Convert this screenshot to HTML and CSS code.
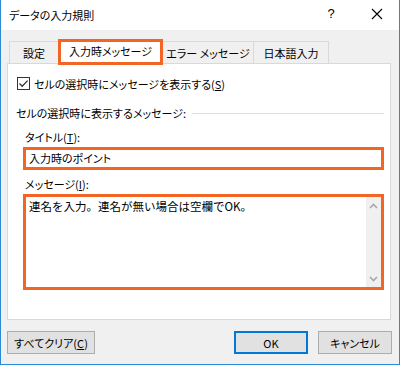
FILE: index.html
```html
<!DOCTYPE html>
<html lang="ja">
<head>
<meta charset="utf-8">
<title>データの入力規則</title>
<link rel="stylesheet" href="styles.css">
</head>
<body>
<div class="window">
  <div class="titlebar">
    <span class="title">データの入力規則</span>
    <span class="help">?</span>
    <span class="close">
      <svg width="12" height="12" viewBox="0 0 12 12"><path d="M1 1 L11 11 M11 1 L1 11" stroke="#000" stroke-width="1.1" fill="none"/></svg>
    </span>
  </div>
  <div class="tabs">
    <div class="tab t1">設定</div>
    <div class="tab t2 active">入力時メッセージ</div>
    <div class="tab t3">エラー メッセージ</div>
    <div class="tab t4">日本語入力</div>
  </div>
  <div class="panel">
    <div class="check-row">
      <span class="checkbox">
        <svg width="11" height="11" viewBox="0 0 11 11"><path d="M1.5 5.5 L4.2 8.2 L9.6 2.6" stroke="#333" stroke-width="1.3" fill="none"/></svg>
      </span>
      <span class="check-label">セルの選択時にメッセージを表示する(<u>S</u>)</span>
    </div>
    <div class="group">
      <span class="group-label">セルの選択時に表示するメッセージ:</span>
      <span class="rule"></span>
    </div>
    <div class="field-label">タイトル(<u>T</u>):</div>
    <div class="input">入力時のポイント</div>
    <div class="field-label">メッセージ(<u>I</u>):</div>
    <div class="textarea">
      <div class="text">連名を入力。連名が無い場合は空欄でOK。</div>
      <div class="scroll">
        <span class="arrow">
          <svg width="9" height="6" viewBox="0 0 9 6"><path d="M1 5 L4.5 1.5 L8 5" stroke="#a8a8a8" stroke-width="1.6" fill="none"/></svg>
        </span>
        <span class="arrow">
          <svg width="9" height="6" viewBox="0 0 9 6"><path d="M1 1 L4.5 4.5 L8 1" stroke="#a8a8a8" stroke-width="1.6" fill="none"/></svg>
        </span>
      </div>
    </div>
  </div>
  <div class="buttons">
    <div class="btn clear">すべてクリア(<u>C</u>)</div>
    <div class="spacer"></div>
    <div class="btn ok">OK</div>
    <div class="btn cancel">キャンセル</div>
  </div>
</div>
</body>
</html>
```

FILE: styles.css
```css
html, body {
  margin: 0;
  padding: 0;
}
body {
  width: 400px;
  height: 365px;
  font-family: "Noto Sans CJK JP", "Noto Sans", sans-serif;
  font-feature-settings: "palt";
  font-size: 11px;
  color: #000;
}
u {
  text-decoration: underline;
  text-underline-offset: 1px;
}
.window {
  box-sizing: border-box;
  width: 400px;
  height: 365px;
  background: #f0f0f0;
  border-left: 1px solid #2b8ad6;
  border-right: 1px solid #2b8ad6;
  border-bottom: 1px solid #2b8ad6;
  display: flex;
  flex-direction: column;
}
.titlebar {
  height: 30px;
  background: #fff;
  display: flex;
  align-items: center;
  padding-left: 8px;
  flex-shrink: 0;
}
.title {
  font-size: 11px;
  line-height: 16px;
}
.help {
  margin-left: auto;
  width: 12px;
  text-align: center;
  font-family: "Liberation Sans", sans-serif;
  font-size: 13px;
  line-height: 16px;
  margin-top: -2px;
}
.close {
  width: 12px;
  height: 12px;
  margin-left: 34px;
  margin-right: 16px;
  margin-top: -2px;
  display: flex;
}
.tabs {
  height: 24px;
  margin-top: 9px;
  padding-left: 8px;
  display: flex;
  align-items: flex-end;
  flex-shrink: 0;
}
.tab {
  box-sizing: border-box;
  height: 22px;
  border-top: 1px solid #d9d9d9;
  border-left: 1px solid #d9d9d9;
  display: flex;
  align-items: center;
  justify-content: center;
  line-height: 16px;
  white-space: nowrap;
  background: #f0f0f0;
}
.t1 { width: 49px; }
.t2 { width: 105px; }
.t3 { width: 90px; border-left: none; }
.t4 { width: 76px; border-right: 1px solid #d9d9d9; }
.tab.active {
  height: 26px;
  margin-bottom: -2px;
  border: 3px solid #f26522;
  background: #fff;
  position: relative;
  z-index: 1;
  padding-bottom: 2px;
}
.panel {
  box-sizing: border-box;
  height: 257px;
  margin-left: 6px;
  margin-right: 8px;
  background: #fff;
  border: 1px solid #d9d9d9;
  padding-top: 13px;
  flex-shrink: 0;
}
.check-row {
  height: 13px;
  display: flex;
  align-items: center;
  margin-left: 9px;
}
.checkbox {
  box-sizing: border-box;
  width: 13px;
  height: 13px;
  border: 1px solid #333;
  background: #fff;
  display: flex;
  align-items: center;
  justify-content: center;
}
.check-label {
  margin-left: 4px;
  line-height: 16px;
}
.group {
  margin-top: 15px;
  height: 16px;
  display: flex;
  align-items: center;
  margin-left: 8px;
  margin-right: 6px;
}
.group-label {
  line-height: 16px;
}
.rule {
  flex: 1;
  height: 1px;
  background: #dcdcdc;
  margin-left: 6px;
}
.field-label {
  margin-left: 17px;
  line-height: 16px;
  margin-top: 8px;
}
.field-label + .input {
  margin-top: 2px;
}
.input {
  box-sizing: border-box;
  height: 23px;
  margin-left: 15px;
  margin-right: 6px;
  border: 3px solid #f26522;
  padding-left: 3px;
  line-height: 17px;
}
.input + .field-label {
  margin-top: 6px;
}
.textarea {
  box-sizing: border-box;
  height: 96px;
  margin-top: 2px;
  margin-left: 15px;
  margin-right: 6px;
  border: 3px solid #f26522;
  display: flex;
}
.text {
  flex: 1;
  padding-left: 3px;
  padding-top: 1px;
  line-height: 16px;
  font-size: 11.5px;
  font-feature-settings: normal;
}
.scroll {
  width: 15px;
  background: #f0f0f0;
  display: flex;
  flex-direction: column;
  justify-content: space-between;
}
.arrow {
  height: 17px;
  display: flex;
  align-items: center;
  justify-content: center;
}
.buttons {
  margin-top: 11px;
  padding-left: 6px;
  padding-right: 7px;
  display: flex;
  height: 23px;
  flex-shrink: 0;
}
.spacer {
  flex: 1;
}
.btn {
  box-sizing: border-box;
  height: 23px;
  background: #e1e1e1;
  border: 1px solid #adadad;
  display: flex;
  align-items: center;
  justify-content: center;
  line-height: 16px;
  white-space: nowrap;
}
.clear { width: 88px; }
.ok {
  width: 74px;
  border: 2px solid #0078d7;
}
.cancel {
  width: 74px;
  margin-left: 10px;
}
```
